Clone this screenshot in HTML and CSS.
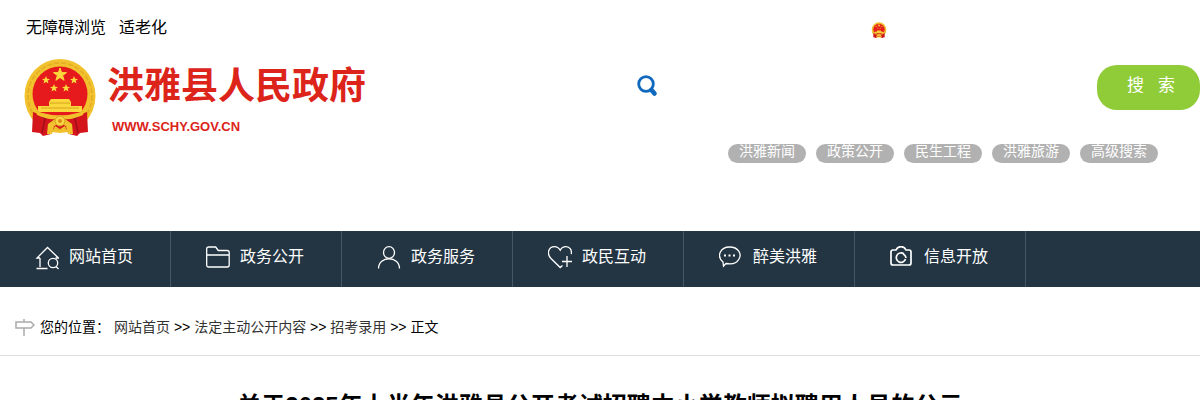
FILE: index.html
```html
<!DOCTYPE html>
<html lang="zh-CN">
<head>
<meta charset="utf-8">
<title>洪雅县人民政府</title>
<link rel="stylesheet" href="styles.css">
</head>
<body>
<header class="header">
  <div class="topbar">
    <nav class="tools"><a href="#">无障碍浏览</a><a href="#">适老化</a></nav>
    <svg class="mini-emblem" viewBox="0 0 72 78" aria-hidden="true"><use href="#emblem"/></svg>
  </div>
  <div class="masthead">
    <a class="brand" href="#">
      <svg class="emblem" viewBox="0 0 72 78" aria-hidden="true">
        <g id="emblem">
          <ellipse cx="36" cy="38" rx="35.500" ry="37" fill="#f1c22e"/>
          <ellipse cx="36" cy="38" rx="32" ry="33" fill="none" stroke="#e3ac22" stroke-width="1.500" stroke-dasharray="5 2"/>
          <circle cx="36" cy="36" r="27.500" fill="#e61a1c"/>
          <path d="M36 10l1.600 4.600h4.900l-3.900 3 1.500 4.700-4.100-2.800-4.100 2.800 1.500-4.700-3.900-3h4.900z" fill="#fbd83c" stroke="#fbd83c"/>
          <g fill="#fbd83c">
            <path d="M22 18l1.100 2.700 2.900.2-2.300 1.800.8 2.800-2.500-1.500-2.500 1.500.8-2.800-2.300-1.800 2.900-.2z"/>
            <path d="M50 18l1.100 2.700 2.900.2-2.300 1.800.8 2.800-2.500-1.500-2.500 1.500.8-2.800-2.300-1.800 2.900-.2z"/>
            <path d="M30 26l1.100 2.700 2.900.2-2.300 1.800.8 2.800-2.500-1.500-2.500 1.500.8-2.800-2.300-1.800 2.900-.2z"/>
            <path d="M42 26l1.100 2.700 2.900.2-2.300 1.800.8 2.800-2.500-1.500-2.500 1.500.8-2.800-2.300-1.800 2.900-.2z"/>
            <path d="M27 41h18l2 3v4h11v6H14v-6h11v-4z"/>
          </g>
          <path d="M26 45h20M17 50h38" stroke="#d9a020" stroke-width="1"/>
          <path d="M9 54q12 5 20 3l7 4 7-4q8 2 20-3l1 20-8 1-3 3-8-2-4-8-5 3-5-3-4 8-8 2-3-3-8-1z" fill="#d4161c"/>
          <path d="M14 54l7 7-3 14M58 54l-7 7 3 14" fill="none" stroke="#9e1019" stroke-width="1.500"/>
          <path d="M12 53q14 5 24 4 10 1 24-4l-1 4q-11 5-18 4l7 5 1 10h-5l-2-8-6-3-6 3-2 8h-5l1-10 7-5q-7 1-18-4z" fill="#f1c22e"/>
          <circle cx="36" cy="63" r="5" fill="#f9d645" stroke="#d99b1c"/>
          <circle cx="36" cy="63" r="2" fill="#df8b18"/>
        </g>
      </svg>
      <span class="brand-text">
        <strong class="brand-name">洪雅县人民政府</strong>
        <span class="brand-url">WWW.SCHY.GOV.CN</span>
      </span>
    </a>
    <div class="search-area">
      <form class="search">
        <svg class="search-icon" viewBox="0 0 22 22" aria-hidden="true"><circle cx="9" cy="9" r="7.300" fill="none" stroke="#1069bd" stroke-width="2.800"/><path d="M14.500 15l3 3.500" stroke="#1069bd" stroke-width="4.600" stroke-linecap="round"/></svg>
        <input class="search-input" type="text" aria-label="搜索">
        <button class="search-button" type="submit"><span>搜</span><span>索</span></button>
      </form>
      <nav class="quick">
        <a href="#">洪雅新闻</a><a href="#">政策公开</a><a href="#">民生工程</a><a href="#">洪雅旅游</a><a href="#">高级搜索</a>
      </nav>
    </div>
  </div>
</header>
<nav class="mainnav">
  <a href="#"><svg viewBox="0 0 24 24" aria-hidden="true"><path d="M5 12H2L12.500 1.500l11 10.500h-3M5 12v9M1.500 22.500h11"/><circle cx="18" cy="17" r="4.700"/><path d="M21 20.500l2.500 2.500"/></svg>网站首页</a>
  <a href="#"><svg viewBox="0 0 24 24" aria-hidden="true"><path d="M.7 19V3q0-2 2-2h7l2.500 3.500h9q2 0 2 2V19q0 2-2 2H2.700q-2 0-2-2zM.7 9h22.500"/></svg>政务公开</a>
  <a href="#"><svg viewBox="0 0 24 24" aria-hidden="true"><ellipse cx="12" cy="6.500" rx="5.500" ry="5.800"/><path d="M1.500 22.500c0-13 21-13 21 0"/></svg>政务服务</a>
  <a href="#"><svg viewBox="0 0 24 24" aria-hidden="true"><path d="M14.500 19.500l-2.300 2L3 12.500C-2 7 1 .7 6.500.7q3.500 0 5.700 3.500Q14 .7 18 .7c4 0 6 3.500 5.300 7.500M19 10v11M14 15.500h10"/></svg>政民互动</a>
  <a href="#"><svg viewBox="0 0 24 24" aria-hidden="true"><path d="M4 16C-3 10 1.500 1 10.500 1S23 8 20 13c-2.500 4.500-8 5.500-13 4.500L4.500 20z"/><path d="M5 9.500h2M9.500 9.500h2M14 9.500h2" stroke-width="2"/></svg>醉美洪雅</a>
  <a href="#"><svg viewBox="0 0 24 24" aria-hidden="true"><path stroke-width="1.700" d="M3 4h3c2-4.500 8-4.500 10 0h3q2 0 2 2v11q0 2-2 2H3q-2 0-2-2V6q0-2 2-2zM14 8a4.700 4.700 0 1 0 1.500 5M16 12a5 5 0 0 0-3-4"/></svg>信息开放</a>
</nav>
<main>
  <div class="crumbs">
    <svg class="sign" viewBox="0 0 20 18" aria-hidden="true"><path d="M1 3h15l3 3-3 3H1zM9 0v3M9 9v8"/></svg>
    <span class="label">您的位置：</span>
    <span><a href="#">网站首页</a> &gt;&gt; <a href="#">法定主动公开内容</a> &gt;&gt; <a href="#">招考录用</a> &gt;&gt; 正文</span>
  </div>
  <h1 class="title">关于2025年上半年洪雅县公开考试招聘中小学教师拟聘用人员的公示</h1>
</main>
</body>
</html>
```
FILE: styles.css
```css
* { box-sizing: border-box; }
body {
  margin: 0;
  background: #fff;
  color: #000;
  font: 14px/20px "Liberation Sans", "Noto Sans CJK SC", sans-serif;
  overflow-x: hidden;
}
a { color: inherit; text-decoration: none; }
.header { padding: 16px 0 68px 24px; }
.topbar {
  display: flex;
  justify-content: space-between;
  align-items: center;
  height: 24px;
  padding: 0 313px 0 2px;
}
.tools { display: flex; gap: 13px; font-size: 16px; line-height: 24px; }
.mini-emblem { width: 16px; height: 16px; margin-top: 3px; }
.masthead { display: flex; justify-content: space-between; padding-top: 18px; }
.brand { display: flex; gap: 11px; color: #dc241b; }
.emblem { width: 72px; height: 78px; }
.brand-text { display: flex; flex-direction: column; padding-top: 9px; }
.brand-name { font-size: 37px; line-height: 40px; font-weight: 700; }
.brand-url {
  padding: 12px 0 0 5px;
  font: bold 13px/16px "Liberation Sans", sans-serif;
}
.search-area { width: 563px; padding-top: 7px; }
.search { display: flex; }
.search-icon { width: 22px; height: 22px; margin-top: 10px; }
.search-input {
  flex: 1;
  min-width: 0;
  height: 45px;
  padding: 0 12px;
  border: 0;
  outline: 0;
  background: transparent;
  font: inherit;
}
.search-button {
  display: flex;
  justify-content: center;
  align-items: center;
  gap: 14px;
  width: 103px;
  height: 45px;
  padding: 0 0 4px 5px;
  border: 0;
  border-radius: 20px;
  background: #8fcc38;
  color: #fff;
  font: 17px/24px "Liberation Sans", "Noto Sans CJK SC", sans-serif;
}
.quick { display: flex; justify-content: flex-end; gap: 10px; padding: 34px 42px 0 0; }
.quick a {
  width: 78px;
  height: 19px;
  border-radius: 10px;
  background: #b1b1b1;
  color: #fff;
  line-height: 15px;
  text-align: center;
}
.mainnav { display: flex; height: 56px; background: #233543; color: #fff; }
.mainnav a {
  display: flex;
  align-items: center;
  gap: 10px;
  width: 171px;
  padding: 0 0 4px 35px;
  border-right: 1px solid #475864;
  font-size: 16px;
  line-height: 24px;
}
.mainnav svg {
  flex: none;
  width: 24px;
  height: 24px;
  margin-top: 2px;
  fill: none;
  stroke: #fff;
  stroke-width: 1.3;
}
.crumbs {
  display: flex;
  align-items: center;
  height: 69px;
  padding: 12px 15px 0;
  border-bottom: 1px solid #ddd;
}
.sign { width: 20px; height: 18px; margin: 2px 5px 0 0; fill: none; stroke: #aaa; stroke-width: 1.5; }
.label { margin-right: 4px; }
.crumbs a { color: #333; }
.title { margin: 0; padding: 30px 20px; font-size: 24px; line-height: 40px; text-align: center; }
```
